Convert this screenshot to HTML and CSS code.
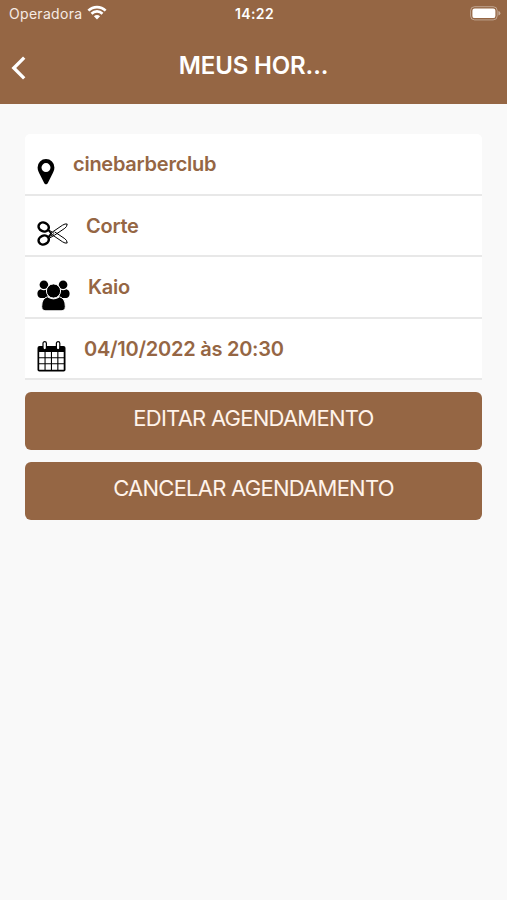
FILE: index.html
```
<!DOCTYPE html>
<html lang="pt-BR">
<head>
<meta charset="UTF-8">
<meta name="viewport" content="width=device-width, initial-scale=1.0">
<title>Meus Horários</title>
<link rel="stylesheet" href="styles.css">
</head>
<body>

<header class="header">
  <div class="status-bar">
    <div class="carrier">
      <span>Operadora</span>
      <svg class="wifi" width="20" height="15" viewBox="0 0 20 15">
        <path d="M1.400 5.600a12.300 12.300 0 0 1 17.200 0M4.500 8.700a7.900 7.900 0 0 1 11 0" fill="none" stroke="#fff" stroke-width="2.700"/>
        <path d="M6.900 11.300a4.600 4.600 0 0 1 6.200 0L10 14.500z" fill="#fff"/>
      </svg>
    </div>
    <span class="time">14:22</span>
    <div class="battery">
      <svg width="31" height="15" viewBox="0 0 31 15">
        <rect x=".6" y=".7" width="26.6" height="13.2" rx="4" fill="none" stroke="#fff" stroke-opacity=".4"/>
        <rect x="2.400" y="2.500" width="23" height="9.600" rx="2.200" fill="#fff"/>
        <path d="M28.400 5v4.600q2-.6 2-2.300t-2-2.300z" fill="#fff" fill-opacity=".45"/>
      </svg>
    </div>
  </div>
  <div class="nav">
    <a class="back" href="#" aria-label="Voltar">
      <svg width="16" height="26" viewBox="0 0 16 26">
        <path d="M14.200 2.600L3.800 13l10.400 10.400" fill="none" stroke="#fff" stroke-width="3.300"/>
      </svg>
    </a>
    <h1>MEUS HOR...</h1>
  </div>
</header>

<main class="content">
  <ul class="details">
    <li>
      <svg class="icon" width="18" height="26" viewBox="0 0 18 26">
        <path fill-rule="evenodd" d="M9 0a8.400 8.400 0 0 1 8.400 8.500c0 3-1.400 5.300-2.800 7.900L10.600 24.600q-1.600 1.600-3.200 0L3.400 16.400C2 13.800.6 11.500.6 8.500A8.400 8.400 0 0 1 9 0zM9 4.100a4.500 4.500 0 1 0 0 9 4.500 4.500 0 0 0 0-9z"/>
      </svg>
      <span>cinebarberclub</span>
    </li>
    <li>
      <svg class="icon" width="31" height="26" viewBox="0 0 31 26">
        <g fill="none" stroke="#000">
          <ellipse cx="6.700" cy="6" rx="5.200" ry="4.400" transform="rotate(25 6.700 6)" stroke-width="2.500"/>
          <ellipse cx="6.700" cy="19" rx="5.200" ry="4.400" transform="rotate(-25 6.700 19)" stroke-width="2.500"/>
          <path d="M12 9.200l3.300 1.900L25.500 4.200q2.700-1.800 4.700-1.200-.2 2.800-2.400 4.300L17.500 14.200l-5.500 3.200" stroke-width="1"/>
          <path d="M12 15.800l3.300-1.900 10.200 6.900q2.700 1.800 4.700 1.200-.2-2.800-2.400-4.300L17.500 10.800" stroke-width="1"/>
          <path d="M11 8.800l3.200 3.700-3.200 3.700" stroke-width="1.600"/>
          <circle cx="15.500" cy="12.500" r="1.200" stroke-width=".8"/>
        </g>
      </svg>
      <span>Corte</span>
    </li>
    <li>
      <svg class="icon people" width="33" height="31" viewBox="0 0 33 31">
        <circle cx="6.900" cy="4.800" r="4.300"/>
        <circle cx="26.100" cy="4.800" r="4.300"/>
        <path d="M3.500 9.200Q7 11.300 9.700 9.300L11 18H3.500Q.4 17.200.4 13.500.5 10.300 3.500 9.200zM29.500 9.200Q26 11.300 23.300 9.300L22 18h7.500q3.100-.8 3.100-4.500-.1-3.200-3.100-4.300z"/>
        <g stroke="#fff" stroke-width="1">
          <circle cx="16.500" cy="11" r="7.100"/>
          <path d="M10.500 16.800Q16.500 21 22.500 16.800q5.800 1.500 5.800 9.700 0 4.300-4.200 4.300H8.900q-4.200 0-4.200-4.300 0-8.200 5.800-9.700z"/>
        </g>
      </svg>
      <span>Kaio</span>
    </li>
    <li>
      <svg class="icon calendar" width="29" height="31" viewBox="0 0 29 31">
        <path d="M2.500 5h24q2 0 2 2v21.700q0 1.800-1.800 1.800H2.300Q.5 30.500.5 28.700V7q0-2 2-2z"/>
        <path d="M2.200 11h5.300v5.200H2.200zM8.600 11h5.300v5.200H8.600zM15 11h5.300v5.200H15zM21.400 11h5.300v5.200h-5.300zM2.200 17.200h5.300v5.100H2.200zM8.600 17.200h5.300v5.100H8.600zM15 17.200h5.300v5.100H15zM21.400 17.200h5.300v5.100h-5.300zM2.200 23.300h5.300v5.400H2.200zM8.600 23.300h5.300v5.400H8.600zM15 23.300h5.300v5.400H15zM21.400 23.300h5.300v5.400h-5.300z" fill="#fff"/>
        <g fill="#fff" stroke="#000" stroke-width="1.200">
          <rect x="6" y=".6" width="3.400" height="8.200" rx="1.700"/>
          <rect x="19.400" y=".6" width="3.400" height="8.200" rx="1.700"/>
        </g>
      </svg>
      <span>04/10/2022 às 20:30</span>
    </li>
  </ul>

  <button class="btn" type="button">EDITAR AGENDAMENTO</button>
  <button class="btn" type="button">CANCELAR AGENDAMENTO</button>
</main>

</body>
</html>
```

FILE: styles.css
```
* {
  box-sizing: border-box;
}

body {
  margin: 0;
  min-height: 100vh;
  background-color: #f9f9f9;
  font-family: Inter, "Liberation Sans", sans-serif;
}

.header {
  height: 103.5px;
  background-color: #956644;
  color: #fff;
}

.status-bar {
  display: grid;
  grid-template-columns: 1fr auto 1fr;
  align-items: center;
  height: 27px;
  padding: 0 7px 0 9px;
  font-size: 14px;
}

.carrier {
  display: flex;
  align-items: center;
  gap: 5px;
  color: #f5ebe4;
  letter-spacing: 0.3px;
}

.wifi {
  margin-top: -3px;
}

.time {
  font-weight: 600;
  letter-spacing: 0.4px;
}

.battery {
  display: flex;
  justify-content: flex-end;
  margin-right: -1px;
}

.nav {
  display: grid;
  grid-template-columns: 40px 1fr 40px;
  align-items: center;
  height: 76px;
}

.back {
  display: flex;
  padding: 5px 0 0 10px;
}

.nav h1 {
  margin: 0;
  text-align: center;
  font-size: 24px;
  font-weight: 600;
  letter-spacing: -0.15px;
}

.content {
  padding: 30.5px 25px 0;
}

.details {
  list-style: none;
  margin: 0 0 12px;
  padding: 0;
  background-color: #fff;
  border-radius: 5px 5px 0 0;
}

.details li {
  display: flex;
  align-items: flex-start;
  gap: 18px;
  height: 61.5px;
  padding: 18px 12px 0;
  border-bottom: 2px solid #e8e8e8;
  color: #956644;
  font-size: 20px;
  font-weight: 600;
  line-height: 24px;
  letter-spacing: -0.25px;
}

.icon {
  flex: none;
  margin-top: 7px;
}

.people {
  margin-top: 5px;
}

.calendar {
  margin-top: 4px;
}

.btn {
  display: block;
  width: 100%;
  height: 58px;
  margin-bottom: 12px;
  padding: 0 0 6px;
  border: none;
  border-radius: 6px;
  background-color: #956644;
  color: #fff3ea;
  font-family: inherit;
  font-size: 22px;
  letter-spacing: -0.75px;
  cursor: pointer;
}
```
